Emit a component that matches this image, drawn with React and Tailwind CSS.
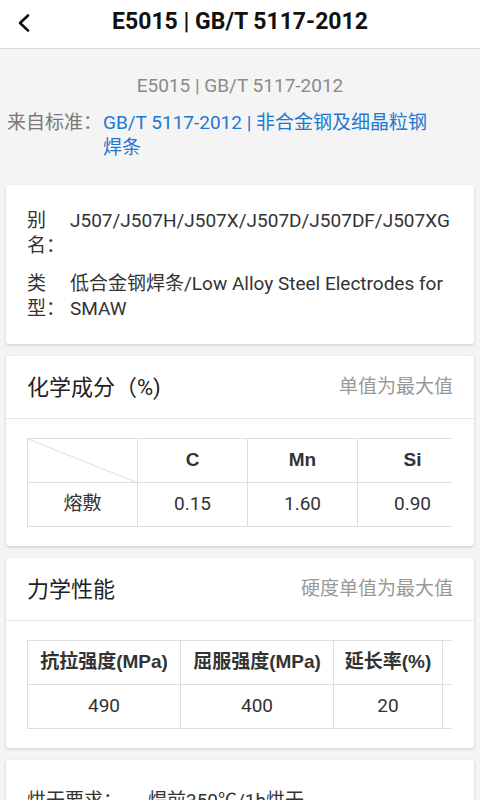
import React from 'react'

const font = { fontFamily: 'Roboto, "Noto Sans CJK SC", sans-serif' }
const boldFont = { fontFamily: '"Liberation Sans", Arial, "Noto Sans CJK SC", sans-serif' }

const Card = ({ children, className = '' }) => (
  <div className={`mx-[6px] bg-white rounded-[3px] shadow-[0_1px_3px_rgba(0,0,0,0.18)] ${className}`}>
    {children}
  </div>
)

const CardHeader = ({ title, note }) => (
  <div className="flex items-center justify-between h-[63px] px-[21px] border-b border-[#e6e6e6]">
    <span className="text-[22px] text-[#222]">{title}</span>
    <span className="text-[19px] text-[#999]">{note}</span>
  </div>
)

const cell = 'border border-[#dedede] h-[44px] text-center text-[19px] text-[#333] p-0'

const App = () => {
  const chem = [
    { name: 'C', value: '0.15' },
    { name: 'Mn', value: '1.60' },
    { name: 'Si', value: '0.90' },
  ]

  const mech = [
    { name: '抗拉强度(MPa)', value: '490', w: 'w-[153px] min-w-[153px]' },
    { name: '屈服强度(MPa)', value: '400', w: 'w-[153px] min-w-[153px]' },
    { name: '延长率(%)', value: '20', w: 'w-[109px] min-w-[109px]' },
    { name: '', value: '', w: 'w-[110px] min-w-[110px]' },
  ]

  return (
    <div className="min-h-[800px] bg-[#f4f4f4] overflow-hidden" style={font}>
      {/* Top bar */}
      <div className="h-[49px] bg-white border-b border-[#d9d9d9] flex items-center pb-[3px] relative">
        <svg className="absolute left-[15px] top-[13px]" width="16" height="20" viewBox="0 0 16 20">
          <path d="M13 2.5 L5 10 L13 17.5" fill="none" stroke="#111" strokeWidth="2.6" strokeLinecap="round" strokeLinejoin="round" />
        </svg>
        <div className="w-full text-center text-[23px] font-bold text-[#111]">E5015 | GB/T 5117-2012</div>
      </div>

      {/* Source */}
      <div className="mt-[24px] text-center text-[19px] leading-[25px] text-[#8a8a8a]">E5015 | GB/T 5117-2012</div>
      <div className="mt-[12px] px-[7px] flex text-[19px] leading-[25px]">
        <span className="w-[96px] shrink-0 text-[#777]">来自标准：</span>
        <span className="text-[#1f77d0]">
          GB/T 5117-2012 | 非合金钢及细晶粒钢
          <br />
          焊条
        </span>
      </div>

      <div className="mt-[25px] flex flex-col gap-[12px]">
        {/* Aliases */}
        <Card className="pt-[23px] pb-[23px] px-[21px] text-[19px] leading-[25px] text-[#333]">
          <div className="flex">
            <span className="w-[32px] shrink-0">别名：</span>
            <span className="ml-[11px] whitespace-nowrap">J507/J507H/J507X/J507D/J507DF/J507XG</span>
          </div>
          <div className="flex mt-[13px]">
            <span className="w-[32px] shrink-0">类型：</span>
            <span className="ml-[11px] whitespace-nowrap">
              低合金钢焊条/Low Alloy Steel Electrodes for
              <br />
              SMAW
            </span>
          </div>
        </Card>

        {/* Chemistry */}
        <Card>
          <CardHeader title="化学成分（%)" note="单值为最大值" />
          <div className="px-[21px] py-[19px]">
            <div className="overflow-hidden w-[425px]">
              <table className="border-collapse table-fixed w-[441px]">
                <tbody>
                  <tr>
                    <td className={`${cell} w-[110px] relative`}>
                      <svg className="absolute inset-0" width="110" height="44" preserveAspectRatio="none" viewBox="0 0 110 44">
                        <line x1="0" y1="0" x2="110" y2="44" stroke="#dedede" strokeWidth="1" />
                      </svg>
                    </td>
                    {chem.map((c) => (
                      <td key={c.name} className={`${cell} w-[110px] font-bold text-[#222]`} style={boldFont}>
                        {c.name}
                      </td>
                    ))}
                  </tr>
                  <tr>
                    <td className={cell}>熔敷</td>
                    {chem.map((c) => (
                      <td key={c.name} className={cell}>{c.value}</td>
                    ))}
                  </tr>
                </tbody>
              </table>
            </div>
          </div>
        </Card>

        {/* Mechanical */}
        <Card>
          <CardHeader title="力学性能" note="硬度单值为最大值" />
          <div className="px-[21px] py-[19px]">
            <div className="overflow-hidden w-[425px]">
              <table className="border-collapse table-fixed w-[525px]">
                <tbody>
                  <tr>
                    {mech.map((m, i) => (
                      <td key={i} className={`${cell} ${m.w} font-bold text-[#222] whitespace-nowrap`} style={boldFont}>{m.name}</td>
                    ))}
                  </tr>
                  <tr>
                    {mech.map((m, i) => (
                      <td key={i} className={cell}>{m.value}</td>
                    ))}
                  </tr>
                </tbody>
              </table>
            </div>
          </div>
        </Card>

        {/* Drying */}
        <Card className="pt-[28px] pb-[22px] px-[21px] text-[19px] leading-[25px] text-[#333]">
          <div className="flex">
            <span className="w-[121px] shrink-0">烘干要求：</span>
            <span>焊前350℃/1h烘干。</span>
          </div>
        </Card>
      </div>
    </div>
  )
}

export default App
